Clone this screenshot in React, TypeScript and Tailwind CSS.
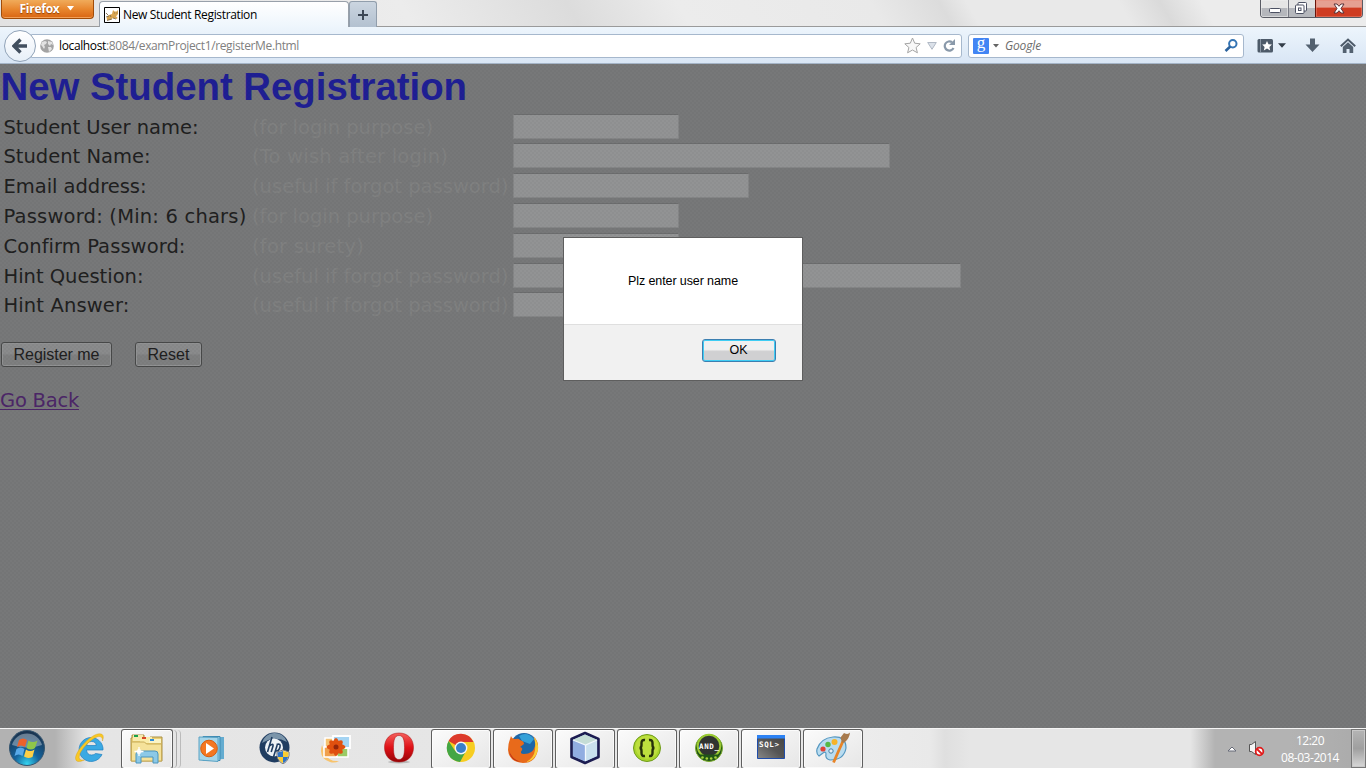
import React, { useLayoutEffect, useRef } from "react";

/** One line of text whose tracking is adjusted to fill the given width. */
function Fit({ w, className = "", children }: { w: number; className?: string; children: React.ReactNode }) {
  const ref = useRef<HTMLSpanElement>(null);
  useLayoutEffect(() => {
    const el = ref.current;
    if (!el) return;
    el.style.letterSpacing = "0px";
    const n = (el.textContent || "").length;
    el.style.letterSpacing = (w - el.getBoundingClientRect().width) / n + "px";
  }, [w]);
  return (
    <span ref={ref} className={"inline-block shrink-0 whitespace-nowrap " + className}>
      {children}
    </span>
  );
}

const UI = "font-['Open_Sans','Noto_Sans',sans-serif]";

function TopBar() {
  return (
    <div className="flex h-[27px] items-start border-b border-[#9a9a9a] bg-[linear-gradient(60deg,#e2e2e2_0%,#ececec_30%,#dcdcdc_42%,#ececec_50%,#e9e9e9_64%,#dcdcdc_69%,#e9e9e9_71%,#e9e9e9_82%,#dadada_85%,#ececec_88%)]">
      <div className="ml-px flex h-[19px] w-[93px] items-center justify-center gap-[7px] rounded-b-[4px] border border-t-0 border-[#a14c08] bg-linear-to-b from-[#f0ab5a] via-[#e8872e] to-[#d96510] pr-[2px] pb-px shadow-[inset_0_-1px_0_#f3a057]">
        <Fit w={40} className={"text-[12px] leading-[16px] font-bold text-white [text-shadow:0_1px_1px_#944100] " + UI}>Firefox</Fit>
        <svg width="7" height="5" viewBox="0 0 7 5"><path d="M0 0h7L3.500 4.500z" fill="#fff" /></svg>
      </div>
      <div className="mt-px ml-[5px] flex h-[27px] w-[250px] items-center rounded-t-[4px] border border-b-0 border-[#98a0aa] bg-linear-to-b from-white to-[#edf5fc] pl-[4px]">
        <svg width="16" height="16" viewBox="0 0 16 16">
          <path d="M.5.5h15v15H.5z" fill="#fff" stroke="#000" />
          <path d="M3 13q-1-3 2-5l3-1 1-4 1.500 1.500h2L14 3v4l-2 2.500 1.500 1-.5 1.500-3-1-2 .5L6 13z" fill="#d9a550" />
          <path d="M2 6l2 2M2 10l3-1M3 13.500l5-1.500M6 8l1 2M10 6h.8M12.500 6h.8M9 11l3 1" stroke="#7d6a48" strokeWidth=".9" />
        </svg>
        <Fit w={134} className={"ml-[3px] text-[12px] leading-[16px] text-black " + UI}>New Student Registration</Fit>
      </div>
      <div className="mt-px flex h-[26px] w-[28px] items-center justify-center rounded-t-[3px] border border-b-0 border-[#919eac] bg-linear-to-b from-[#cbd5e0] to-[#b3c1d0]">
        <svg width="10" height="10" viewBox="0 0 10 10"><path d="M5 0v10M0 5h10" stroke="#3d4856" strokeWidth="2" /></svg>
      </div>
      <div className="mr-[3px] ml-auto flex h-[18px] overflow-hidden rounded-b-[4px] border border-t-0 border-[#595b64]">
        <div className="flex w-[27px] items-center justify-center bg-linear-to-b from-[#e5e5e5] from-45% to-[#b5b7bc] to-50% pt-[3px] shadow-[inset_0_0_0_1px_#eeeeee90]">
          <svg width="12" height="5" viewBox="0 0 12 5"><rect x=".5" y=".5" width="11" height="4" rx="1" fill="#fff" stroke="#4c5163" /></svg>
        </div>
        <div className="flex w-[27px] items-center justify-center border-l border-[#777983] bg-linear-to-b from-[#e5e5e5] from-45% to-[#b5b7bc] to-50% pr-[3px] pb-[2px]">
          <svg width="12" height="12" viewBox="0 0 12 12" fill="#fff" stroke="#4c5163"><rect x="3" y=".5" width="8.500" height="8.500" rx="1" /><rect x=".5" y="3" width="8.500" height="8.500" rx="1" /><rect x="3.500" y="6" width="2.500" height="2.500" /></svg>
        </div>
        <div className="flex w-[47px] items-center justify-center border-l border-[#6a1409] bg-linear-to-b from-[#e5a092] from-40% to-[#cf3c22] to-50% pb-px shadow-[inset_0_0_0_1px_#e9897880]">
          <svg width="12" height="11" viewBox="0 0 12 11"><path d="M1 1h3l2 2.300L8 1h3L8 5.500l3 4.500H8L6 7.700 4 10H1l3-4.500z" fill="#fff" stroke="#583238" /></svg>
        </div>
      </div>
    </div>
  );
}

function NavBar() {
  return (
    <div className="flex h-[37px] items-center border-b border-[#a5b5c8] bg-linear-to-b from-[#edf5fc] to-[#d9e6f5] pt-px">
      <div className="relative z-10 ml-[4px] flex size-[32px] shrink-0 items-center justify-center rounded-full border border-[#91a3b8] bg-linear-to-b from-white to-[#e7eff8]">
        <svg width="16" height="16" viewBox="0 0 16 16"><path d="M8.500 1.500L2 8l6.500 6.500M3 8h12" fill="none" stroke="#424f5f" strokeWidth="3.400" /></svg>
      </div>
      <div className="-ml-[5px] flex h-[24px] w-[931px] shrink-0 items-center rounded-r-[3px] border border-[#a6b8cd] bg-white pl-[8px]">
        <svg width="14" height="14" viewBox="0 0 14 14"><circle cx="7" cy="7" r="6.800" fill="#a3a3a3" /><path d="M2 3l3-1 2 1-1 2-2 1 1 2-1 2-2-3-1-1zM8 2l4 1 1 3-2-1-1 2-2-2zM8 8l3 0 1 2-3 3z" fill="#e2e2e2" /></svg>
        <Fit w={240} className={"ml-[5px] text-[12px] leading-[16px] text-[#808080] " + UI}><span className="text-black">localhost</span>:8084/examProject1/registerMe.html</Fit>
        <div className="mr-[5px] ml-auto flex items-center gap-[6px]">
          <svg width="18" height="17" viewBox="0 0 18 17"><path d="M9.500 1l2.200 5.200 5.500.6-4.100 3.700 1.300 5.300-4.900-2.800-4.900 2.800 1.300-5.300-4.100-3.700 5.500-.6z" fill="#f8f8f8" stroke="#a5a5a5" strokeLinejoin="round" /></svg>
          <svg width="10" height="8" viewBox="0 0 10 8"><path d="M.7.500h8.600L5 7.300z" fill="#dbe1e9" stroke="#b1b9c5" /></svg>
          <svg width="13" height="13" viewBox="0 0 13 13"><path d="M10.500 9A4.600 4.600 0 1 1 9 3.200" fill="none" stroke="#8999aa" strokeWidth="2.200" /><path d="M12 0v6H6z" fill="#8999aa" /></svg>
        </div>
      </div>
      <div className="ml-[6px] flex h-[24px] w-[276px] shrink-0 items-center rounded-[3px] border border-[#a6b8cd] bg-white pr-[5px] pl-[4px]">
        <div className="flex size-[16px] items-center justify-center rounded-[1px] bg-[#4285f4]"><span className="-mt-[6px] font-['Liberation_Serif',serif] text-[17px] leading-[16px] text-white">g</span></div>
        <svg className="ml-[4px]" width="6" height="4" viewBox="0 0 6 4"><path d="M0 0h6L3 3.500z" fill="#646464" /></svg>
        <Fit w={36} className={"ml-[6px] text-[12px] leading-[16px] text-[#6c6c6c] italic " + UI}>Google</Fit>
        <svg className="ml-auto" width="14" height="14" viewBox="0 0 14 14"><circle cx="8.800" cy="4.800" r="3.700" fill="none" stroke="#3474b4" strokeWidth="2" /><path d="M6.300 7.500L1.500 12" stroke="#2b629d" strokeWidth="2.600" /></svg>
      </div>
      <div className="ml-[12.500px] flex items-center">
        <svg width="17" height="15" viewBox="0 0 17 15"><rect x=".5" y="1" width="15.500" height="13.500" rx="1.500" fill="#4d5a69" /><path d="M3.500 1v13" stroke="#8995a3" /><path d="M10 3l1.500 3.200 3.400.3-2.500 2.400.8 3.500L10 10.600l-3.200 1.800.8-3.500L5.200 6.500l3.300-.3z" fill="#fff" /></svg>
        <svg className="ml-[4px]" width="8" height="5" viewBox="0 0 8 5"><path d="M0 .3h8L4 4.700z" fill="#333d48" /></svg>
        <svg className="ml-[19px]" width="15" height="15" viewBox="0 0 15 15"><path d="M5 .5h5v6h4.500l-7 7.500-7-7.500H5z" fill="#536170" /></svg>
        <svg className="ml-[20.500px]" width="16" height="15" viewBox="0 0 16 15"><path d="M.8 8.200L8 1.500l7.200 6.700" fill="none" stroke="#4d5a69" strokeWidth="2" /><path d="M2.800 9L8 4.300 13.200 9v6H9.500v-4h-3v4H2.800z" fill="#536170" /></svg>
      </div>
    </div>
  );
}

const VERD = "font-['DejaVu_Sans',sans-serif] text-[19.5px] leading-[28px]";
const rows = [
  { label: "Student User name:", lw: 195, hint: "(for login purpose)", hw: 181, box: "w-[166px]" },
  { label: "Student Name:", lw: 147, hint: "(To wish after login)", hw: 196, box: "w-[377px]" },
  { label: "Email address:", lw: 143, hint: "(useful if forgot password)", hw: 256.5, box: "w-[236px]" },
  { label: "Password: (Min: 6 chars)", lw: 243, hint: "(for login purpose)", hw: 181, box: "w-[166px]" },
  { label: "Confirm Password:", lw: 182, hint: "(for surety)", hw: 112, box: "w-[166px]" },
  { label: "Hint Question:", lw: 140, hint: "(useful if forgot password)", hw: 256.5, box: "w-[448px]" },
  { label: "Hint Answer:", lw: 126, hint: "(useful if forgot password)", hw: 256.5, box: "w-[236px]" },
];

function Page() {
  const btn = "flex h-[25px] items-center justify-center rounded-[3px] border border-[#484949] bg-linear-to-b from-[#8a8b8c] from-45% to-[#7e7f80] to-55% shadow-[inset_0_0_0_1px_#929394] font-['Liberation_Sans',sans-serif] text-[16px] leading-[18px] text-[#202020]";
  return (
    <div className="relative flex h-[664px] flex-col overflow-hidden bg-[#777879]">
      <h1 className="h-[49.6px] pl-[0.5px] pt-px font-['Liberation_Sans',sans-serif] text-[38.4px] leading-[44px] font-bold text-[#1f1f94]">
        <Fit w={466.5}>New Student Registration</Fit>
      </h1>
      <div className="flex flex-col">
        {rows.map((r) => (
          <div key={r.label} className="flex h-[29.8px] items-start">
            <div className={"w-[248px] shrink-0 pl-[3.500px] text-[#202020] " + VERD}><Fit w={r.lw}>{r.label}</Fit></div>
            <div className={"w-[265px] shrink-0 pl-[4px] text-[#808181] " + VERD}><Fit w={r.hw}>{r.hint}</Fit></div>
            <div className={"h-[25px] shrink-0 rounded-[1px] border border-[#858687] border-t-[#6c6d6e] bg-[#929394] " + r.box} />
          </div>
        ))}
      </div>
      <div className="mt-[20px] flex pl-px">
        <div className={btn + " w-[111px]"}><Fit w={86}>Register me</Fit></div>
        <div className={btn + " ml-[23px] w-[67px]"}><Fit w={42}>Reset</Fit></div>
      </div>
      <a className={"mt-[20px] w-[79px] text-[#4c2668] " + VERD}><Fit w={79} className="underline decoration-1 underline-offset-[2px]">Go Back</Fit></a>
      <div className="absolute inset-0 bg-[radial-gradient(circle_at_1px_1px,#00000007_0.9px,transparent_1.100px),radial-gradient(circle_at_3px_3px,#00000007_0.9px,transparent_1.100px)] bg-size-[4px_4px]" />
      <div className="absolute top-[173px] left-[563px] flex h-[144px] w-[240px] flex-col border border-[#5e5e5e] bg-[#f1f1f1]">
        <div className="flex h-[87px] items-center justify-center border-b border-[#dfdfdf] bg-white font-['Liberation_Sans',sans-serif] text-[12.500px] leading-[16px] text-black"><Fit w={110}>Plz enter user name</Fit></div>
        <div className="flex justify-end pt-[14px] pr-[26px]">
          <div className="flex h-[23px] w-[74px] items-center justify-center rounded-[3px] border border-[#3c7fb1] bg-linear-to-b from-[#f0f0f0] from-45% to-[#d0d0d2] to-55% pr-px pb-px font-['Liberation_Sans',sans-serif] text-[12.500px] leading-[16px] text-black shadow-[inset_0_0_0_1px_#3fcdf4]"><Fit w={18}>OK</Fit></div>
        </div>
      </div>
    </div>
  );
}

const Orb = () => (
  <svg width="38" height="38" viewBox="0 0 38 38">
    <defs><radialGradient id="orb" cx=".5" cy=".95" r=".9"><stop offset="0" stopColor="#35d3ef" /><stop offset=".4" stopColor="#14639d" /><stop offset="1" stopColor="#1a3450" /></radialGradient></defs>
    <circle cx="19" cy="19" r="17.500" fill="url(#orb)" stroke="#35556f" />
    <path d="M4 16a15.500 15.500 0 0 1 30 0q-15 5-30 0z" fill="#fff" opacity=".35" />
    <path d="M11 11q4-3 8 0l-2 7q-4-3-8 0z" fill="#ec622b" /><path d="M20.500 11.500q4 3 9 0l-2.500 7.500q-4 3-8.500 0z" fill="#8fc64a" />
    <path d="M8.500 20q4-3 8 0l-2 7q-4-3-8 0z" fill="#58a9e8" /><path d="M18 20.500q4 3 8.500 0l-2 7.500q-5 2-8.500-.5z" fill="#fccf46" />
  </svg>
);
const IE = () => (
  <svg width="32" height="32" viewBox="0 0 32 32">
    <path d="M28 22.500A12 12 0 1 1 29 16v2H12.500q.5 5 5 5 3 0 4-1.500zM12.700 13.500h9.500Q22 9.500 17.500 9.500t-4.800 4z" fill="#3aa9e3" stroke="#1e7fc0" strokeWidth=".7" />
    <path d="M28.500 9Q31 2 26 1.800C18 1 2 18 1.500 26q0 6 9 2-7 1-5-5C8 15 21 3.500 26 4.500q3 .5 2.500 4.500z" fill="#f9c824" stroke="#d59c13" strokeWidth=".4" />
  </svg>
);
const Explorer = () => (
  <svg width="34" height="32" viewBox="0 0 34 32">
    <path d="M2 6V3h12v3h6V5h12v24H1V6z" fill="#e9ce74" stroke="#aa9045" />
    <path d="M3 3h10v6H3z" fill="#f7eaac" /><path d="M4 3h4v2H4z" fill="#18a24a" /><path d="M10 5h12v6H10z" fill="#faedaa" /><path d="M12 5h4v2h-4z" fill="#d84728" /><path d="M19 7h12v4H19z" fill="#faf4c6" /><path d="M20 7h4v2h-4z" fill="#2d8bd7" />
    <path d="M1.500 10h13l2 2h15v17h-30z" fill="#f5e29a" stroke="#c8ac58" />
    <path d="M6 31V22q0-3 3-3h16q3 0 3 3v9h-5v-6H11v6z" fill="#8cc9e7" stroke="#4a94bc" />
    <path d="M9 15v9M4.500 19.500h9" stroke="#fff" strokeWidth="1.300" /><circle cx="9" cy="19.500" r="2.500" fill="#fff" opacity=".8" />
  </svg>
);
const Media = () => (
  <svg width="30" height="28" viewBox="0 0 30 28"><path d="M7 2h19v22l-19 1z" fill="#64acd0" /><path d="M5 1.500h17v24H5z" fill="#8ecbe6" stroke="#3d89b2" /><path d="M1 2l19 .5v24L1 25z" fill="#a5d5e9" stroke="#5ba3c4" /><circle cx="11" cy="13.500" r="8.300" fill="#f47721" stroke="#d65d0e" /><path d="M8 8l8 5.500L8 19z" fill="#fff" /></svg>
);
const HP = () => (
  <svg width="32" height="32" viewBox="0 0 32 32">
    <circle cx="15.500" cy="15.500" r="15" fill="#203d61" /><path d="M3 11a13 13 0 0 1 25-1q-12-7-25 1z" fill="#7b95aa" />
    <circle cx="15" cy="15.500" r="9" fill="#eef3f7" />
    <path d="M13 5L8.500 20M10.500 14q4-3.500 3.500 0l-1.800 6M18.500 12l-4 13M17.500 12.500q4.500-1.500 3.500 2.500-1 4.500-4.500 4" fill="none" stroke="#203d61" strokeWidth="1.600" />
    <path d="M24 18l6 2q1 8-6 12-7-4-6-12z" fill="#eee" stroke="#777" /><path d="M24 25h5q-1 4-5 6zM24 19v6h-5l-.5-4.500z" fill="#2f73c5" /><path d="M24 19l5.500 1.500-.5 4.500h-5zM19 25h5v6q-4-2-5-6z" fill="#f9cc32" />
  </svg>
);
const Gallery = () => (
  <svg width="32" height="30" viewBox="0 0 32 30">
    <path d="M2 11Q-2 24 10 28q5 1.500 9-1-10 1-14-7z" fill="#f8c36c" />
    <path d="M5 4h14v9H5z" fill="#f5c271" stroke="#fff" strokeWidth="1.500" /><path d="M4 13h13v10H4z" fill="#f0a04c" stroke="#fff" strokeWidth="1.500" /><path d="M17 14h11v9H17z" fill="#9bcb66" stroke="#fff" strokeWidth="1.500" /><path d="M13 2h17v12H13z" fill="#a4d4f3" stroke="#fff" strokeWidth="1.800" />
    <g fill="#e0500f"><ellipse cx="16" cy="13" rx="9.500" ry="3.500" /><ellipse cx="16" cy="13" rx="3.500" ry="9" /><ellipse cx="16" cy="13" rx="9" ry="3.500" transform="rotate(45 16 13)" /><ellipse cx="16" cy="13" rx="9" ry="3.500" transform="rotate(-45 16 13)" /></g><circle cx="16" cy="13" r="2.500" fill="#94260a" />
  </svg>
);
const Opera = () => (
  <svg width="32" height="32" viewBox="0 0 32 32"><defs><linearGradient id="op" x2="0" y2="1"><stop stopColor="#f5605c" /><stop offset=".5" stopColor="#df1117" /><stop offset="1" stopColor="#960407" /></linearGradient></defs><ellipse cx="16" cy="30" rx="11" ry="1.500" fill="#99999990" /><path fillRule="evenodd" d="M16 1C7 1 1.500 7 1.500 15.500S7 30 16 30s14.500-6 14.500-14.500S25 1 16 1zm0 2.500c4.500 0 5.500 5 5.500 12S20.500 27.500 16 27.500s-5.500-5-5.500-12 1-12 5.500-12z" fill="url(#op)" stroke="#a70c0e" strokeWidth=".5" /></svg>
);
const Chrome = () => (
  <svg width="30" height="30" viewBox="0 0 30 30"><circle cx="15" cy="15" r="14" fill="#f7cd21" /><path d="M15 15L2.500 8A14 14 0 0 1 27.500 9H15z" fill="#dc3a2c" /><path d="M15 15L9.500 18.500 2.600 8A14 14 0 0 0 14 29l6-11z" fill="#44a644" /><circle cx="15" cy="15" r="6.400" fill="#f4f6f8" /><circle cx="15" cy="15" r="5" fill="#397fca" /></svg>
);
const Firefox = () => (
  <svg width="32" height="32" viewBox="0 0 32 32"><circle cx="17" cy="14.500" r="13.500" fill="#1d66a7" /><path d="M12 4q8-5 15 3l-4 5-8-3z" fill="#34a0d8" /><path d="M4 4q1 3 4 3 4-1 5 1 4 1 4 4l-4 3q3 1 2 3-3 4 2 4 9 0 11-8 1-6-2-10 6 5 5 13-2 14-15 14Q2 30 1 18 1 11 4 4z" fill="#e86a1b" /><path d="M27 5q5 6 4 13-3 11-12 12 8-4 9-12 1-6-1-13z" fill="#f9cd35" /><path d="M2 18q1 11 12 12-10-3-12-12z" fill="#bd3017" /></svg>
);
const Cube = () => (
  <svg width="32" height="34" viewBox="0 0 32 34"><path d="M16 2l13.500 6v18L16 32 2.500 26V8z" fill="#9fb9e0" stroke="#1c1c51" strokeWidth="2.600" strokeLinejoin="round" /><path d="M4 8.700L16 3.500l12 5.200-11 5.300z" fill="#c5ddd6" /><path d="M4 9l12.500 5v16.300L4 25z" fill="#91ade1" /><path d="M28 9l-11.500 5v16.300L28 25z" fill="#c9e0ee" /><path d="M4 9l12.500 5L28 9M16.500 14v16" fill="none" stroke="#f2f8fc" strokeWidth="1.300" /></svg>
);
const Braces = () => (
  <svg width="30" height="30" viewBox="0 0 30 30"><circle cx="15" cy="15" r="13.500" fill="#a8d42b" stroke="#6f9b1a" /><circle cx="15" cy="14" r="11.500" fill="#bddf3e" /><path d="M13 7q-3.500-.5-3.500 3v2q0 3-2 3 2 0 2 3v2q0 3.500 3.500 3M17 7q3.500-.5 3.500 3v2q0 3 2 3-2 0-2 3v2q0 3.500-3.500 3" fill="none" stroke="#25300b" strokeWidth="2.400" /></svg>
);
const AndIcon = () => (
  <svg width="30" height="30" viewBox="0 0 30 30"><circle cx="15" cy="15" r="13.500" fill="#205517" stroke="#7aaa2a" /><circle cx="15" cy="13" r="11.300" fill="#303431" stroke="#9aca32" strokeWidth="2" /><path d="M5 21.500h20l-4 5.500H9z" fill="#205517" /><g fill="#a8d43a"><circle cx="8.500" cy="24.500" r="1.300" /><circle cx="12.800" cy="25.500" r="1.300" /><circle cx="17.200" cy="25.500" r="1.300" /><circle cx="21.500" cy="24.500" r="1.300" /></g><text x="5" y="16" fontFamily="DejaVu Sans Mono" fontWeight="bold" fontSize="7.500" fill="#fff" textLength="20">AND_</text></svg>
);
const Sql = () => (
  <svg width="30" height="27" viewBox="0 0 30 27"><defs><linearGradient id="sq" x1="1" y1="0" x2="0" y2="1"><stop stopColor="#454545" /><stop offset=".5" stopColor="#555" /><stop offset="1" stopColor="#888" /></linearGradient></defs><path d="M1.500 1.500h27v23h-27z" fill="url(#sq)" stroke="#1f4ca9" /><path d="M1 1h28v3.500H1z" fill="#2c82f4" /><text x="3" y="12.500" fontFamily="DejaVu Sans Mono" fontSize="7.500" fontWeight="bold" fill="#fff" textLength="20">SQL&gt;</text></svg>
);
const Paint = () => (
  <svg width="34" height="32" viewBox="0 0 34 32"><path d="M17 5q13-1 13 11-2 12-16 12-5-1-4-6 0-3-3-1l-4 3q-3-2-2-7Q5 6 17 5z" fill="#b9dcf0" stroke="#5497c0" strokeWidth="1.200" /><circle cx="7" cy="17" r="2.600" fill="#df4338" /><circle cx="12" cy="12.500" r="2.700" fill="#57b845" /><circle cx="18.500" cy="10" r="3" fill="#f6b329" /><circle cx="15" cy="19" r="2.200" fill="#e7eef4" stroke="#427fa7" /><path d="M27 9L17.500 30.500" stroke="#e78427" strokeWidth="2.800" /><path d="M26 10.500l-1.500-5L28 1q4 2 6-.5-.5 6-5.500 10z" fill="#a87a4d" /></svg>
);

const running = [Chrome, Firefox, Cube, Braces, AndIcon, Sql, Paint];
const TILE = "flex h-[40px] items-center justify-center rounded-[3px] border border-[#5f5f5f] border-b-[#777] bg-linear-to-br from-[#fbfbfb] to-[#e6e6e6] pb-[2px] shadow-[inset_0_0_0_1px_#ffffffb0]";

function TaskBar() {
  return (
    <div className="flex h-[40px] items-center border-t border-[#f5f5f5] bg-[linear-gradient(90deg,#b2b2b2_0px,#b2b2b2_55px,#e5e5e5_88px,#e7e7e7_860px,#ececec_863px,#e9e9e9_930px,#dfdfdf_945px,#e6e6e6_970px,#e6e6e6_1190px,#b3b3b3_1215px,#b3b3b3_1290px,#aaaaaa_1366px)] shadow-[0_-1px_0_#4f4f4f]">
      <div className="ml-[8px] w-[38px] shrink-0 pb-[2px]"><Orb /></div>
      <div className="ml-[28px] w-[32px] shrink-0 pb-[2px]"><IE /></div>
      <div className={TILE + " ml-[15px] w-[52px] shrink-0"}><Explorer /></div>
      <div className="h-[38px] w-[4px] shrink-0 rounded-r border-r border-[#aaa]" />
      <div className="h-[38px] w-[4px] shrink-0 rounded-r border-r border-[#bbb]" />
      <div className="ml-[17px] w-[30px] shrink-0"><Media /></div>
      <div className="ml-[31px] w-[32px] shrink-0 pb-px"><HP /></div>
      <div className="ml-[29px] w-[32px] shrink-0"><Gallery /></div>
      <div className="ml-[31px] w-[32px] shrink-0 pb-[2px]"><Opera /></div>
      <div className="ml-[16px] flex gap-[2px]">
        {running.map((Icon, i) => (
          <div key={i} className={TILE + " w-[60px]"}><Icon /></div>
        ))}
      </div>
      <div className="ml-auto flex h-full items-center">
        <svg width="10" height="6" viewBox="0 0 10 6"><path d="M1 5l4-4 4 4z" fill="#fff" stroke="#676b78" /></svg>
        <svg className="ml-[11px]" width="17" height="17" viewBox="0 0 17 17"><path d="M1.500 4.500h2l4-3v13l-4-3h-2z" fill="#f5f5f5" stroke="#555" /><circle cx="11.500" cy="11.500" r="3.800" fill="#fff" stroke="#e01b1b" strokeWidth="1.800" /><path d="M9 9l5 5" stroke="#e01b1b" strokeWidth="1.800" /></svg>
        <div className={"ml-[15px] flex w-[60px] flex-col items-center text-[12px] leading-[17px] text-white " + UI}>
          <Fit w={28}>12:20</Fit>
          <Fit w={58}>08-03-2014</Fit>
        </div>
        <div className="ml-[11px] h-full w-[15px] border border-[#777] bg-linear-to-b from-[#b5b5b5] via-[#9f9f9f] to-[#d8d8d8] shadow-[inset_0_0_0_1px_#c8c8c8]" />
      </div>
    </div>
  );
}

export default function App() {
  return (
    <div className="flex h-[768px] w-[1366px] flex-col overflow-hidden">
      <TopBar />
      <NavBar />
      <Page />
      <TaskBar />
    </div>
  );
}
